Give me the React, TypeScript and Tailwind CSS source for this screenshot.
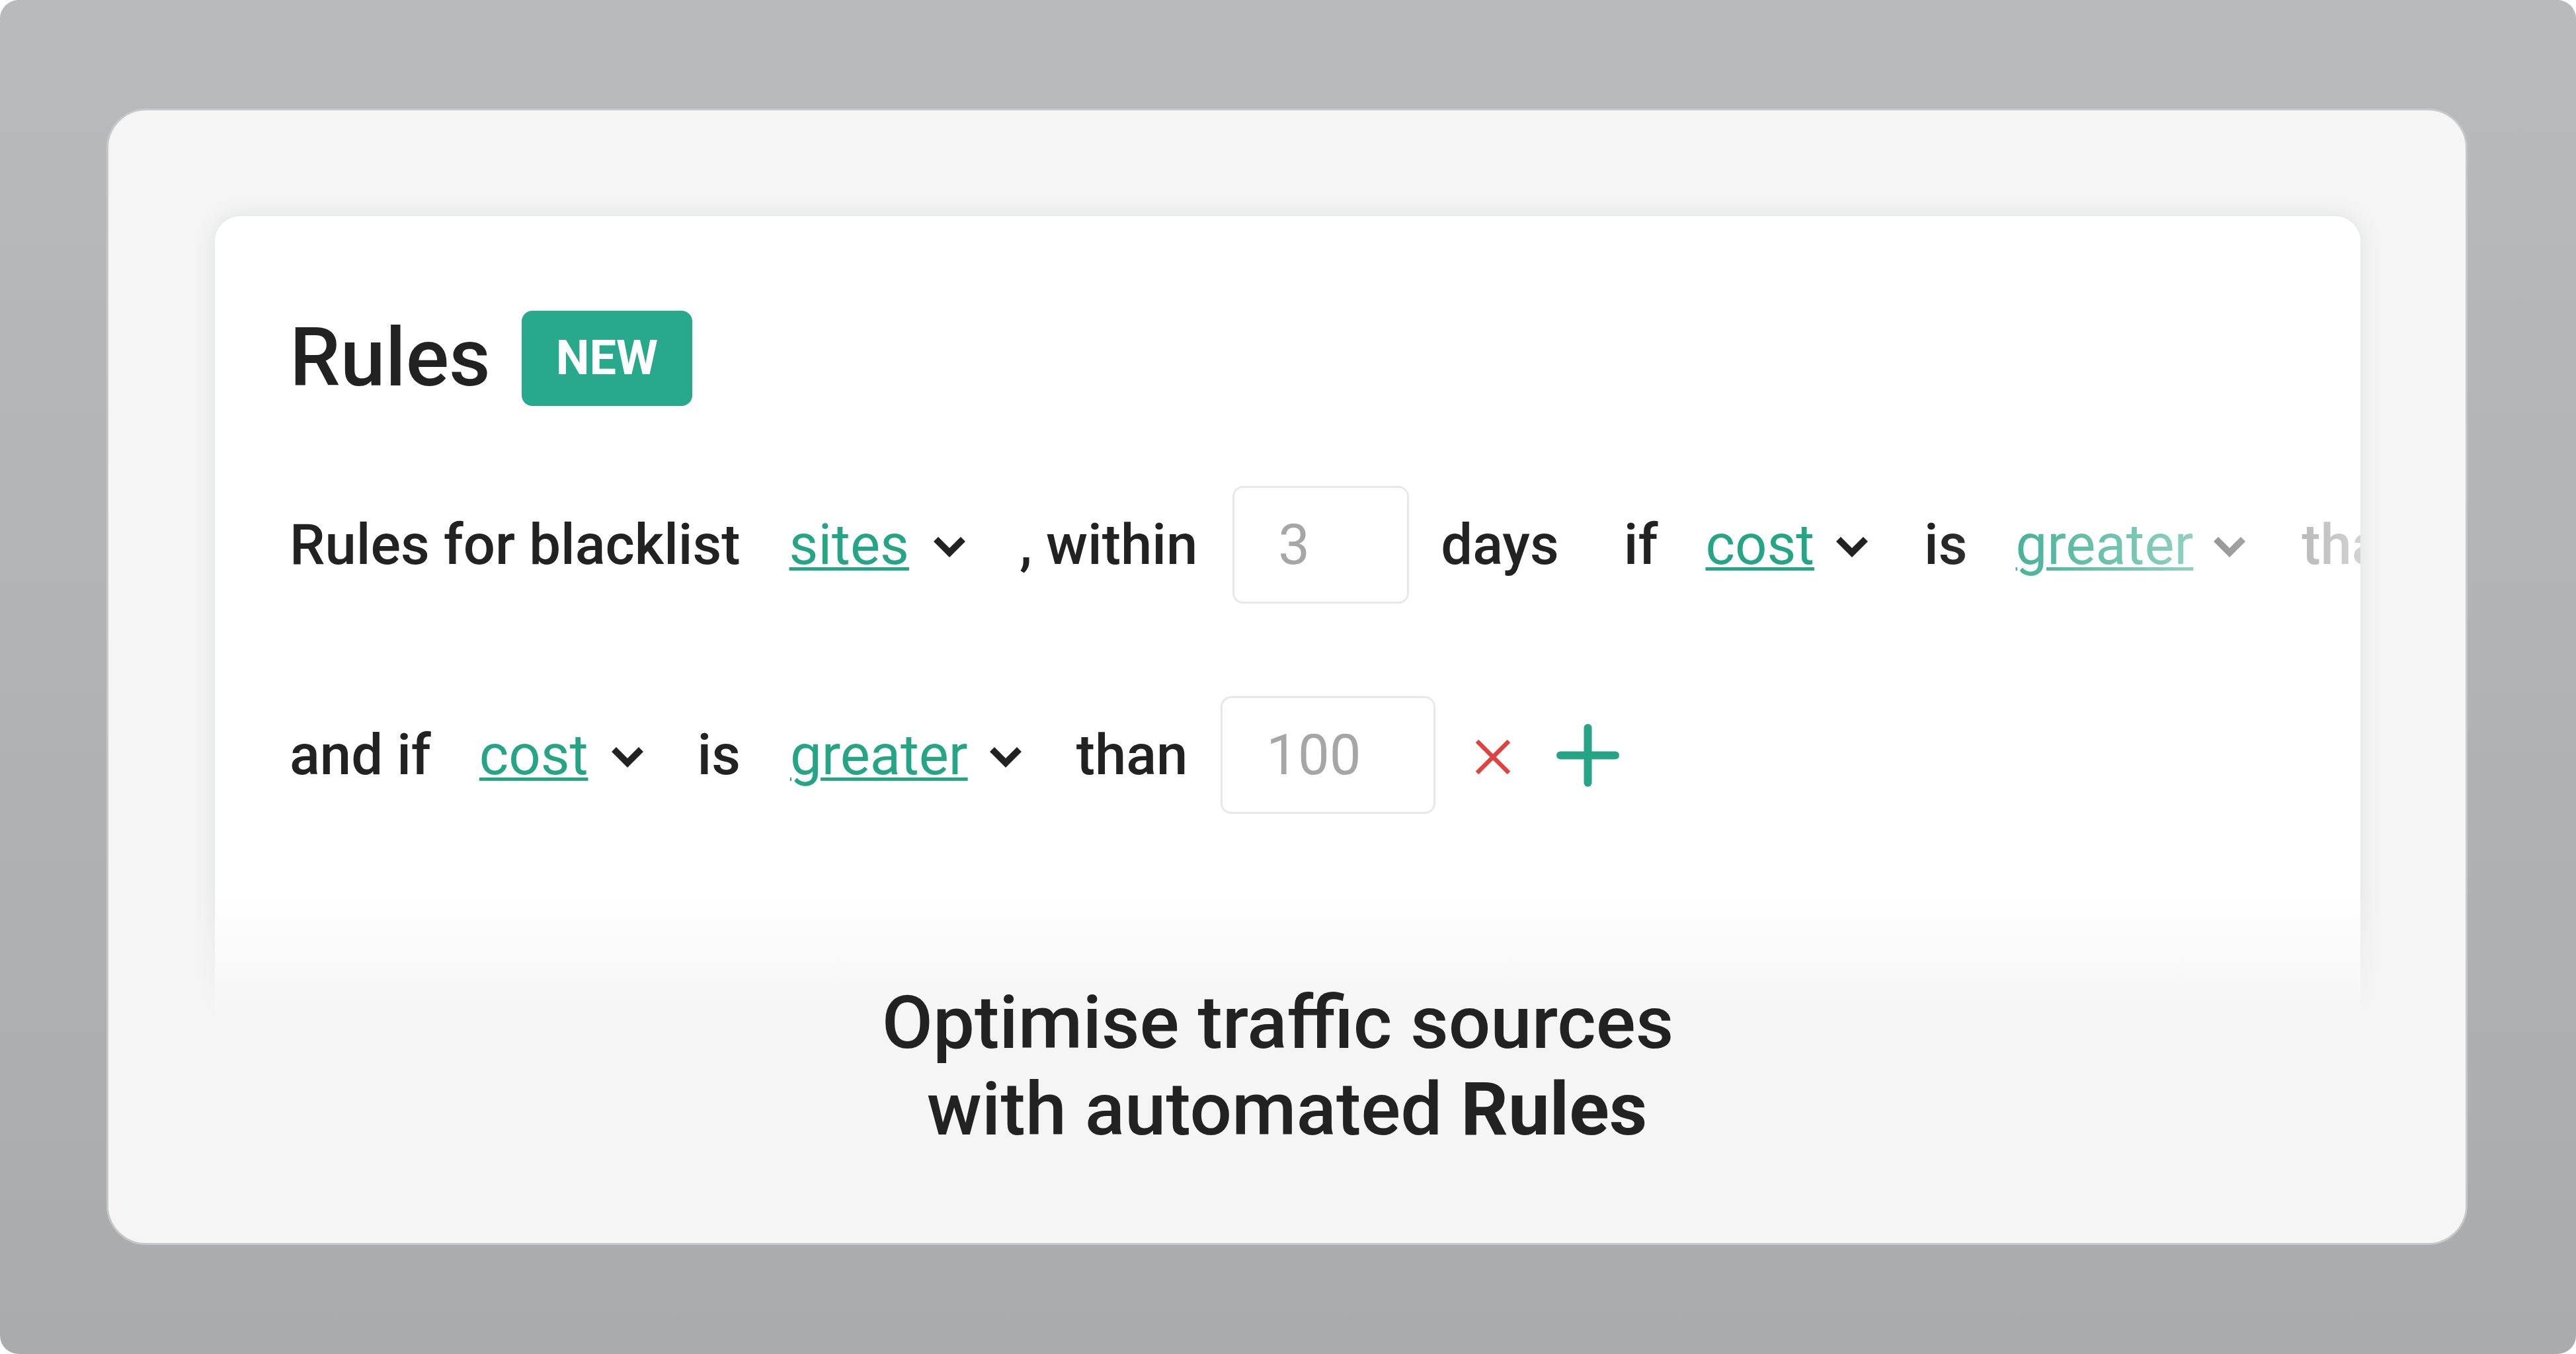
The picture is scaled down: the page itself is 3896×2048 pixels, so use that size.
import React from "react";

const font = { fontFamily: "Roboto, 'Noto Sans', Arial, sans-serif" };

function Chevron({ className = "" }: { className?: string }) {
  return (
    <svg
      width="48"
      height="32"
      viewBox="0 0 48 32"
      className={"mt-[8px] shrink-0 " + className}
    >
      <polygon points="0,7 7,0 24,17 41,0 48,7 24,31" fill="#222222" />
    </svg>
  );
}

function Link({ children }: { children: React.ReactNode }) {
  return (
    <span className="font-normal text-[#26a586] underline decoration-[#26a586] decoration-[5px] underline-offset-[5px]">
      {children}
    </span>
  );
}

function Box({ value, w }: { value: string; w: string }) {
  return (
    <div
      className={
        "flex h-[178px] shrink-0 items-center rounded-[16px] border-[3px] border-[#e8e8e8] bg-white pl-[66px] font-normal text-[#a6a6a6] " +
        w
      }
    >
      {value}
    </div>
  );
}

export default function App() {
  return (
    <div className="h-[2048px] w-[3896px] bg-white" style={font}>
      <div className="h-full w-full rounded-[28px] bg-[linear-gradient(to_bottom,#b9babc,#aaabac)] pb-[165px] pl-[161px] pr-[164px] pt-[164px]">
        <div className="relative h-full w-full overflow-hidden rounded-[60px] border-[3px] border-[#c7c8c9] bg-[#f5f5f5] pl-[159px] pr-[157px] pt-[158px]">
          <div className="h-[1400px] overflow-hidden rounded-[40px] border-2 border-[#e7edec] bg-white pl-[113px] pt-[143px] shadow-[0_0_34px_rgba(0,0,0,0.08)]">
            {/* Heading */}
            <div className="flex h-[144px] items-center">
              <span className="text-[122px] font-medium leading-none text-[#222222]">
                Rules
              </span>
              <span className="ml-[47px] flex h-[144px] w-[258px] items-center justify-center rounded-[16px] bg-[#28a98b] text-[72px] font-bold leading-none text-white">
                NEW
              </span>
            </div>

            {/* Row 1 */}
            <div className="relative mt-[121px] flex h-[178px] items-center whitespace-nowrap text-[85px] font-medium leading-none text-[#222222]">
              <span>Rules for blacklist</span>
              <span className="ml-[74px]">
                <Link>sites</Link>
              </span>
              <span className="ml-[37px] flex">
                <Chevron />
              </span>
              <span className="ml-[82px]">, within</span>
              <span className="ml-[53px]">
                <Box value="3" w="w-[267px]" />
              </span>
              <span className="ml-[48px]">days</span>
              <span className="ml-[98px]">if</span>
              <span className="ml-[72px]">
                <Link>cost</Link>
              </span>
              <span className="ml-[33px] flex">
                <Chevron />
              </span>
              <span className="ml-[85px]">is</span>
              <span className="ml-[73px]">
                <Link>greater</Link>
              </span>
              <span className="ml-[31px] flex">
                <Chevron />
              </span>
              <span className="ml-[85px]">than</span>
              <div className="pointer-events-none absolute bottom-0 right-0 top-0 w-[644px] bg-[linear-gradient(to_right,rgba(255,255,255,0),rgba(255,255,255,0.8))]" />
            </div>

            {/* Row 2 */}
            <div className="mt-[140px] flex h-[178px] items-center whitespace-nowrap text-[85px] font-medium leading-none text-[#222222]">
              <span>and if</span>
              <span className="ml-[73px]">
                <Link>cost</Link>
              </span>
              <span className="ml-[36px] flex">
                <Chevron />
              </span>
              <span className="ml-[81px]">is</span>
              <span className="ml-[75px]">
                <Link>greater</Link>
              </span>
              <span className="ml-[33px] flex">
                <Chevron />
              </span>
              <span className="ml-[83px]">than</span>
              <span className="ml-[50px]">
                <Box value="100" w="w-[325px]" />
              </span>
              <svg
                width="54"
                height="54"
                viewBox="0 0 54 54"
                className="ml-[60px] mt-[6px] shrink-0"
              >
                <line x1="3" y1="3" x2="51" y2="51" stroke="#e2423f" strokeWidth="6.5" />
                <line x1="51" y1="3" x2="3" y2="51" stroke="#e2423f" strokeWidth="6.5" />
              </svg>
              <svg
                width="95"
                height="95"
                viewBox="0 0 95 95"
                className="ml-[69px] shrink-0"
              >
                <line x1="6" y1="47.5" x2="89" y2="47.5" stroke="#26a586" strokeWidth="12" strokeLinecap="round" />
                <line x1="47.5" y1="6" x2="47.5" y2="89" stroke="#26a586" strokeWidth="12" strokeLinecap="round" />
              </svg>
            </div>
          </div>

          {/* Bottom fade + caption */}
          <div className="absolute inset-x-0 bottom-0 h-[530px] bg-[linear-gradient(to_bottom,rgba(245,245,245,0)_0px,#f5f5f5_190px)] pt-[131px] text-center text-[112px] font-medium leading-[131px] text-[#222222]">
            <div>Optimise traffic sources{"\u00a0"}</div>
            <div>
              with automated <span className="font-bold">Rules</span>
            </div>
          </div>
        </div>
      </div>
    </div>
  );
}
